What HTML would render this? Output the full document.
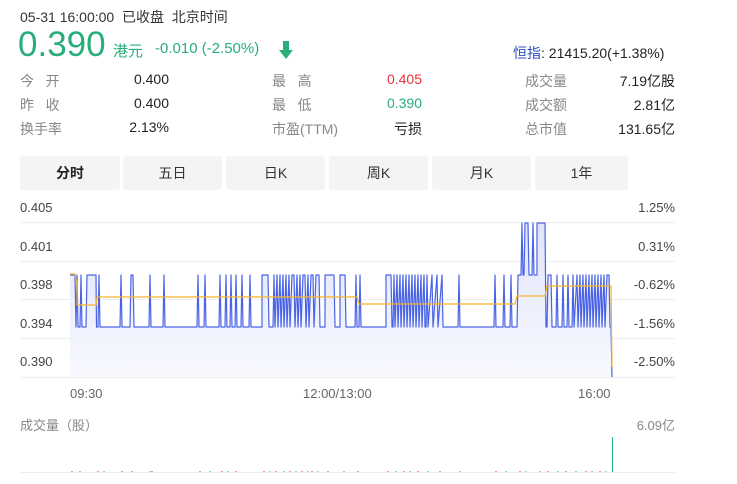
<!DOCTYPE html>
<html><head><meta charset="utf-8"><style>
body{margin:0;width:737px;height:484px;background:#fff;font-family:"Liberation Sans","Noto Sans CJK SC",sans-serif;position:relative;overflow:hidden;color:#222}
.a{position:absolute;white-space:nowrap}
.g{color:#27ae7a}
.l{color:#888;font-size:14px}
.v{font-size:14px;text-align:right}
.tab{position:absolute;top:156px;height:34px;line-height:34px;background:#f3f4f6;border-radius:3px;text-align:center;font-size:14px;color:#333}
.ax{position:absolute;font-size:13px;color:#444}
</style></head><body>
<div class="a" style="left:20px;top:7px;font-size:14px;color:#333">05-31 16:00:00&nbsp; 已收盘&nbsp; 北京时间</div>
<div class="a g" style="left:18px;top:25px;font-size:35px;">0.390</div>
<div class="a g" style="left:113px;top:40px;font-size:15px">港元</div>
<div class="a g" style="left:155px;top:40px;font-size:15px">-0.010 (-2.50%)</div>
<svg class="a" style="left:278px;top:40px" width="16" height="20"><path d="M5 1h6v9h4l-7 9-7-9h4z" fill="#27ae7a"/></svg>
<div class="a" style="left:513px;top:43px;font-size:14px"><span style="color:#2b4fc0">恒指</span>: 21415.20(+1.38%)</div>

<div class="a l" style="left:20px;top:71px">今&nbsp;&nbsp;&nbsp;开</div><div class="a v" style="right:568px;top:71px">0.400</div>
<div class="a l" style="left:20px;top:95px">昨&nbsp;&nbsp;&nbsp;收</div><div class="a v" style="right:568px;top:95px">0.400</div>
<div class="a l" style="left:20px;top:119px">换手率</div><div class="a v" style="right:568px;top:119px">2.13%</div>
<div class="a l" style="left:272px;top:71px">最&nbsp;&nbsp;&nbsp;高</div><div class="a v" style="right:315px;top:71px;color:#e8323c">0.405</div>
<div class="a l" style="left:272px;top:95px">最&nbsp;&nbsp;&nbsp;低</div><div class="a v g" style="right:315px;top:95px">0.390</div>
<div class="a l" style="left:272px;top:119px">市盈(TTM)</div><div class="a v" style="right:315px;top:119px">亏损</div>
<div class="a l" style="left:525px;top:71px">成交量</div><div class="a v" style="right:62px;top:71px">7.19亿股</div>
<div class="a l" style="left:525px;top:95px">成交额</div><div class="a v" style="right:62px;top:95px">2.81亿</div>
<div class="a l" style="left:525px;top:119px">总市值</div><div class="a v" style="right:62px;top:119px">131.65亿</div>

<div class="tab" style="left:20px;width:100px;font-weight:bold;color:#222">分时</div>
<div class="tab" style="left:123px;width:99px">五日</div>
<div class="tab" style="left:226px;width:99px">日K</div>
<div class="tab" style="left:329px;width:99px">周K</div>
<div class="tab" style="left:432px;width:99px">月K</div>
<div class="tab" style="left:535px;width:93px">1年</div>

<div class="ax" style="left:20px;top:200px">0.405</div>
<div class="ax" style="left:20px;top:239px">0.401</div>
<div class="ax" style="left:20px;top:277px">0.398</div>
<div class="ax" style="left:20px;top:316px">0.394</div>
<div class="ax" style="left:20px;top:354px">0.390</div>
<div class="ax" style="right:62px;top:200px">1.25%</div>
<div class="ax" style="right:62px;top:239px">0.31%</div>
<div class="ax" style="right:62px;top:277px">-0.62%</div>
<div class="ax" style="right:62px;top:316px">-1.56%</div>
<div class="ax" style="right:62px;top:354px">-2.50%</div>
<div class="ax" style="left:70px;top:386px;color:#666">09:30</div>
<div class="ax" style="left:303px;top:386px;color:#666">12:00/13:00</div>
<div class="ax" style="left:578px;top:386px;color:#666">16:00</div>
<div class="ax" style="left:20px;top:415px;color:#888">成交量（股）</div>
<div class="ax" style="right:62px;top:415px;color:#888">6.09亿</div>

<svg class="a" style="left:0;top:0" width="737" height="484">
<defs><linearGradient id="gr" x1="0" y1="0" x2="0" y2="1"><stop offset="0" stop-color="#dfe4fb"/><stop offset="1" stop-color="#f8f9fe"/></linearGradient></defs>
<g stroke="#eceef0" stroke-width="1">
<line x1="20" y1="222.5" x2="675" y2="222.5"/><line x1="20" y1="261.5" x2="675" y2="261.5"/><line x1="20" y1="299.5" x2="675" y2="299.5"/><line x1="20" y1="338.5" x2="675" y2="338.5"/><line x1="20" y1="377.5" x2="675" y2="377.5"/><line x1="20" y1="472.5" x2="675" y2="472.5"/>
</g>
<g id="blue">
<path fill="url(#gr)" stroke="none" d="M70 275 L75 275 L76 327 L77 275 L78 327 L80 327 L81 275 L82 327 L86 327 L87 275 L96 275 L96.5 327 L98 327 L99 275 L100 327 L120 327 L121 275 L122 327 L130 327 L131 275 L133 275 L134 327 L149 327 L150 275 L151 327 L163 327 L164 275 L165 327 L197 327 L198 275 L199 327 L204 327 L205 275 L206 327 L219 327 L220 275 L221 327 L225 327 L226 275 L227 327 L230 327 L231 275 L232 327 L235 327 L236 275 L237 327 L241 327 L242 275 L243 327 L249 327 L250 275 L251 327 L262 327 L262 275 L268 275 L269 327 L273 327 L274 275 L275 327 L277 275 L278 327 L280 275 L281 327 L283 275 L284 327 L286 275 L287 327 L289 275 L290 327 L292 275 L294 275 L295 327 L297 275 L298 327 L300 275 L301 327 L303 275 L305 275 L306 327 L308 275 L309 327 L311 275 L313 275 L314 327 L316 275 L319 275 L320 327 L325 327 L325 275 L334 275 L335 327 L340 327 L340 275 L345 275 L346 327 L355 327 L356 275 L357 327 L359 327 L360 275 L361 327 L386 327 L386 275 L391 275 L392 327 L393 327 L394 275 L395 327 L397 275 L398 327 L400 275 L401 327 L403 275 L404 327 L406 275 L407 327 L409 275 L410 327 L412 275 L413 327 L415 275 L416 327 L418 275 L419 327 L421 275 L422 327 L424 275 L425 327 L426 327 L427 275 L428 327 L432 275 L433 327 L437 275 L438 327 L442 275 L443 327 L458 327 L459 275 L460 327 L494 327 L495 275 L496 327 L503 327 L504 275 L505 327 L510 327 L511 275 L512 327 L517 327 L518 275 L521 275 L522 223 L523 275 L524 275 L525 223 L528 223 L529 275 L532 275 L533 223 L534 275 L537 275 L537 223 L545 223 L546 327 L547 327 L548 275 L551 275 L552 327 L556 327 L557 275 L558 327 L562 327 L563 275 L564 327 L567 327 L568 275 L569 327 L572 327 L573 275 L574 327 L577 275 L578 327 L580 275 L581 327 L583 275 L584 327 L586 275 L587 327 L589 275 L590 327 L592 275 L593 327 L595 275 L596 327 L598 275 L599 327 L601 275 L602 327 L604 275 L605 327 L607 275 L609 275 L610 327 L611 327 L612 377 L70 377 Z"/>
<path fill="none" stroke="#4a63e6" stroke-width="1.2" stroke-linejoin="round" d="M70 275 L75 275 L76 327 L77 275 L78 327 L80 327 L81 275 L82 327 L86 327 L87 275 L96 275 L96.5 327 L98 327 L99 275 L100 327 L120 327 L121 275 L122 327 L130 327 L131 275 L133 275 L134 327 L149 327 L150 275 L151 327 L163 327 L164 275 L165 327 L197 327 L198 275 L199 327 L204 327 L205 275 L206 327 L219 327 L220 275 L221 327 L225 327 L226 275 L227 327 L230 327 L231 275 L232 327 L235 327 L236 275 L237 327 L241 327 L242 275 L243 327 L249 327 L250 275 L251 327 L262 327 L262 275 L268 275 L269 327 L273 327 L274 275 L275 327 L277 275 L278 327 L280 275 L281 327 L283 275 L284 327 L286 275 L287 327 L289 275 L290 327 L292 275 L294 275 L295 327 L297 275 L298 327 L300 275 L301 327 L303 275 L305 275 L306 327 L308 275 L309 327 L311 275 L313 275 L314 327 L316 275 L319 275 L320 327 L325 327 L325 275 L334 275 L335 327 L340 327 L340 275 L345 275 L346 327 L355 327 L356 275 L357 327 L359 327 L360 275 L361 327 L386 327 L386 275 L391 275 L392 327 L393 327 L394 275 L395 327 L397 275 L398 327 L400 275 L401 327 L403 275 L404 327 L406 275 L407 327 L409 275 L410 327 L412 275 L413 327 L415 275 L416 327 L418 275 L419 327 L421 275 L422 327 L424 275 L425 327 L426 327 L427 275 L428 327 L432 275 L433 327 L437 275 L438 327 L442 275 L443 327 L458 327 L459 275 L460 327 L494 327 L495 275 L496 327 L503 327 L504 275 L505 327 L510 327 L511 275 L512 327 L517 327 L518 275 L521 275 L522 223 L523 275 L524 275 L525 223 L528 223 L529 275 L532 275 L533 223 L534 275 L537 275 L537 223 L545 223 L546 327 L547 327 L548 275 L551 275 L552 327 L556 327 L557 275 L558 327 L562 327 L563 275 L564 327 L567 327 L568 275 L569 327 L572 327 L573 275 L574 327 L577 275 L578 327 L580 275 L581 327 L583 275 L584 327 L586 275 L587 327 L589 275 L590 327 L592 275 L593 327 L595 275 L596 327 L598 275 L599 327 L601 275 L602 327 L604 275 L605 327 L607 275 L609 275 L610 327 L611 327 L612 377"/>
</g>
<path d="M70 274 L75 274 L77 283 L77 305 L96 305 L97 297 L357 297 L359 304 L515 304 L517 296 L545 296 L547 286 L611 286 L612 367" fill="none" stroke="#f5b32a" stroke-width="1.2"/>
<line x1="612.5" y1="437" x2="612.5" y2="472" stroke="#27ae7a" stroke-width="1"/>
<g stroke-width="1">
<path d="M72 471v1M98 471v1M122 471v1M132 471v1M152 471v1M200 471v1M222 471v1M236 471v1M264 471v1M276 471v1M290 471v1M302 471v1M312 471v1M328 471v1M358 471v1M388 471v1M404 471v1M418 471v1M440 471v1M496 471v1M520 471v1M548 471v1M566 471v1M586 471v1M600 471v1" stroke="#e8323c"/>
<path d="M80 471v1M104 471v1M150 471v1M210 471v1M228 471v1M270 471v1M284 471v1M296 471v1M308 471v1M318 471v1M344 471v1M396 471v1M410 471v1M428 471v1M460 471v1M506 471v1M526 471v1M540 471v1M558 471v1M576 471v1M592 471v1M606 471v1" stroke="#27ae7a"/>
</g>
</svg>
</body></html>
